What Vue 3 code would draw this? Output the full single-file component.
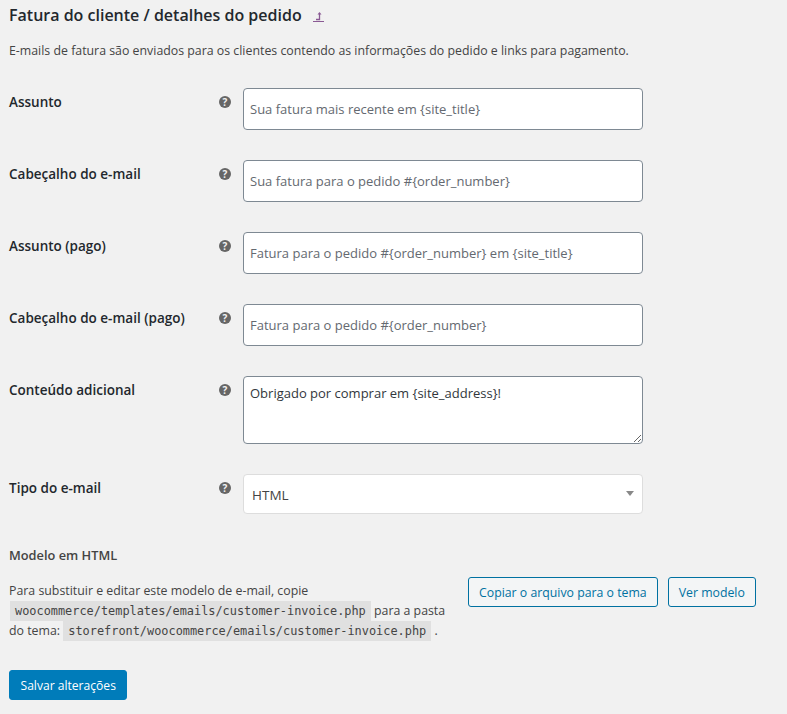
<template>
  <div class="page">
    <h2 class="title">
      <span>Fatura do cliente / detalhes do pedido</span>
      <a class="up-link" href="#">
        <svg width="12" height="12" viewBox="0 0 12 12">
          <path d="M0 10.5h11" stroke="#8a5a94" stroke-width="1" fill="none" />
          <path d="M3 8.5h3.5V3" stroke="#8a5a94" stroke-width="1.3" fill="none" />
          <path d="M4.5 3.5 6.5 1l2 2.5z" fill="#8a5a94" />
        </svg>
      </a>
    </h2>
    <p class="intro">E-mails de fatura são enviados para os clientes contendo as informações do pedido e links para pagamento.</p>

    <div class="form">
      <template v-for="f in fields" :key="f.label">
        <label class="label">{{ f.label }}</label>
        <span class="help">?</span>
        <input class="input" type="text" :placeholder="f.placeholder" />
      </template>

      <label class="label">Conteúdo adicional</label>
      <span class="help">?</span>
      <textarea class="input area" v-model="extra"></textarea>

      <label class="label">Tipo do e-mail</label>
      <span class="help">?</span>
      <div class="select">
        <span>HTML</span>
        <i class="caret"></i>
      </div>
    </div>

    <h3 class="sub">Modelo em HTML</h3>
    <div class="template-row">
      <p class="template-text">
        Para substituir e editar este modelo de e-mail, copie
        <code class="first">woocommerce/templates/emails/customer-invoice.php</code> para a pasta do tema:
        <code>storefront/woocommerce/emails/customer-invoice.php</code> .
      </p>
      <div class="actions">
        <button class="btn">Copiar o arquivo para o tema</button>
        <button class="btn">Ver modelo</button>
      </div>
    </div>

    <button class="save">Salvar alterações</button>
  </div>
</template>

<script setup>
import { ref } from 'vue'

const extra = ref('Obrigado por comprar em {site_address}!')

const fields = [
  { label: 'Assunto', placeholder: 'Sua fatura mais recente em {site_title}' },
  { label: 'Cabeçalho do e-mail', placeholder: 'Sua fatura para o pedido #{order_number}' },
  { label: 'Assunto (pago)', placeholder: 'Fatura para o pedido #{order_number} em {site_title}' },
  { label: 'Cabeçalho do e-mail (pago)', placeholder: 'Fatura para o pedido #{order_number}' }
]
</script>

<style>
html, body {
  background: #f1f1f1;
}
</style>

<style scoped>
.page {
  box-sizing: border-box;
  width: 787px;
  height: 714px;
  overflow: hidden;
  padding: 4px 0 0 9px;
  background: #f1f1f1;
  color: #444;
  font-family: "Open Sans", "Liberation Sans", sans-serif;
  font-size: 12.35px;
  line-height: 20px;
}

.title {
  display: flex;
  align-items: center;
  margin: 0;
  font-size: 16px;
  font-weight: 600;
  line-height: 22px;
  color: #23282d;
}

.up-link {
  display: flex;
  margin: 3px 0 0 11px;
}

.intro {
  margin: 15px 0 0;
}

.form {
  display: grid;
  grid-template-columns: 210px 24px 400px;
  row-gap: 30px;
  margin-top: 27px;
}

.label {
  padding-top: 4px;
  font-size: 13.5px;
  font-weight: 600;
  color: #23282d;
}

.help {
  width: 12px;
  height: 12px;
  margin-top: 8px;
  border-radius: 50%;
  background: #666;
  color: #f1f1f1;
  font-size: 10px;
  font-weight: 700;
  line-height: 12px;
  text-align: center;
}

.input {
  box-sizing: border-box;
  width: 400px;
  height: 42px;
  padding: 0 6px;
  border: 1px solid #7e8993;
  border-radius: 4px;
  background: #fff;
  color: #32373c;
  font-family: inherit;
  font-size: 13px;
  outline: none;
}

.input::placeholder {
  color: #646970;
  opacity: 1;
}

.area {
  display: block;
  height: 68px;
  padding: 6px;
  line-height: 20px;
  resize: both;
}

.select {
  box-sizing: border-box;
  display: flex;
  align-items: center;
  justify-content: space-between;
  width: 400px;
  height: 40px;
  padding: 2px 8px 0 8px;
  border: 1px solid #ddd;
  border-radius: 4px;
  background: #fff;
  color: #444;
  font-size: 13.5px;
}

.caret {
  margin-top: -3px;
  border-left: 4px solid transparent;
  border-right: 4px solid transparent;
  border-top: 5px solid #888;
}

.sub {
  margin: 31px 0 0;
  font-size: 12.8px;
  font-weight: 600;
  line-height: 20px;
  color: #444;
}

.template-row {
  display: flex;
  align-items: flex-start;
  margin-top: 16px;
}

.template-text {
  width: 448px;
  margin: 0;
}

code {
  padding: 3px 5px;
  background: rgba(0, 0, 0, 0.07);
  font-family: "DejaVu Sans Mono", "Liberation Mono", monospace;
  font-size: 11.9px;
}

.first {
  margin-left: 1px;
}

.actions {
  display: flex;
  gap: 10px;
  margin-left: 11px;
  margin-top: -4px;
}

.btn {
  height: 30px;
  padding: 0 10px;
  border: 1px solid #0071a1;
  border-radius: 3px;
  background: #f3f5f6;
  color: #0071a1;
  font-family: inherit;
  font-size: 12.3px;
}

.save {
  display: block;
  height: 30px;
  margin-top: 29px;
  padding: 0 10.5px;
  border: 1px solid #007cba;
  border-radius: 3px;
  background: #007cba;
  color: #fff;
  font-family: inherit;
  font-size: 12.1px;
}
</style>
